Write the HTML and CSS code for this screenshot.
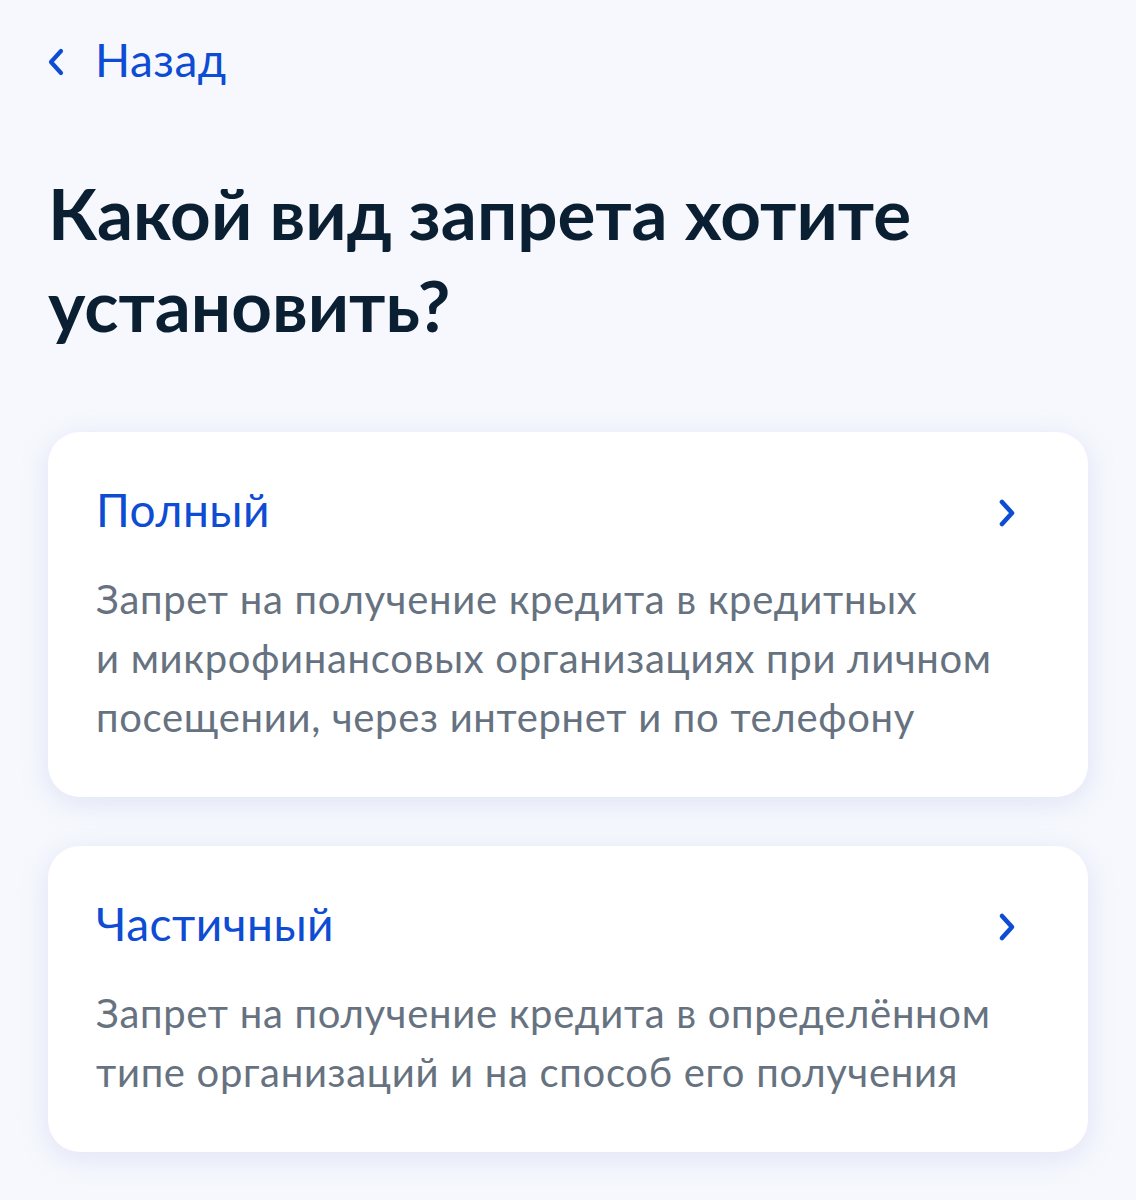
FILE: index.html
```html
<!DOCTYPE html>
<html lang="ru">
<head>
<meta charset="utf-8">
<title>Какой вид запрета хотите установить?</title>
<link rel="stylesheet" href="styles.css">
</head>
<body>
<div class="page">
  <a class="back" href="#">
    <svg class="back-icon" viewBox="0 0 22 32" width="22" height="32" aria-hidden="true">
      <path d="M16 5 L6 16 L16 27" fill="none" stroke="#0d4cd3" stroke-width="4.2" stroke-linecap="round" stroke-linejoin="round"/>
    </svg>
    <span class="back-text">Назад</span>
  </a>
  <h1 class="heading">Какой вид запрета хотите установить?</h1>
  <div class="cards">
    <a class="card" href="#">
      <div class="card-head">
        <span class="card-title">Полный</span>
        <svg class="chev" viewBox="0 0 22 32" width="22" height="32" aria-hidden="true">
          <path d="M6 5 L16 16 L6 27" fill="none" stroke="#0d4cd3" stroke-width="4.6" stroke-linecap="round" stroke-linejoin="round"/>
        </svg>
      </div>
      <p class="card-desc">Запрет на получение кредита в&nbsp;кредитных и&nbsp;микрофинансовых организациях при личном посещении, через интернет и&nbsp;по&nbsp;телефону</p>
    </a>
    <a class="card" href="#">
      <div class="card-head">
        <span class="card-title">Частичный</span>
        <svg class="chev" viewBox="0 0 22 32" width="22" height="32" aria-hidden="true">
          <path d="M6 5 L16 16 L6 27" fill="none" stroke="#0d4cd3" stroke-width="4.6" stroke-linecap="round" stroke-linejoin="round"/>
        </svg>
      </div>
      <p class="card-desc">Запрет на получение кредита в&nbsp;определённом типе организаций и&nbsp;на&nbsp;способ его получения</p>
    </a>
  </div>
</div>
</body>
</html>
```

FILE: styles.css
```css
* { box-sizing: border-box; }
html, body { margin: 0; padding: 0; }
body {
  background: #f6f8fd;
  font-family: Lato, "Noto Sans", sans-serif;
  color: #0b1f33;
}
.page {
  padding: 32px 48px 40px;
}
.back {
  display: flex;
  align-items: center;
  gap: 28px;
  text-decoration: none;
  color: #0d4cd3;
  height: 56px;
}
.back-icon {
  margin-left: -3px;
  margin-top: 4px;
  flex: none;
}
.back-text {
  font-size: 46px;
  line-height: 56px;
  letter-spacing: 0.5px;
}
.heading {
  margin: 79px 0 81px;
  font-size: 71px;
  line-height: 92px;
  font-weight: 700;
  color: #0b1f33;
  max-width: 900px;
}
.cards {
  display: flex;
  flex-direction: column;
  gap: 49px;
}
.card {
  display: block;
  background: #ffffff;
  border-radius: 32px;
  padding: 50px 70px 50px 48px;
  text-decoration: none;
  box-shadow: 0 6px 28px rgba(150, 168, 220, 0.24);
}
.card-head {
  display: flex;
  align-items: center;
  justify-content: space-between;
}
.card-title {
  font-size: 46px;
  line-height: 56px;
  letter-spacing: 0.5px;
  color: #0d4cd3;
}
.chev {
  flex: none;
  margin-top: 6px;
}
.card-desc {
  margin: 32px 0 0;
  font-size: 40px;
  line-height: 59px;
  letter-spacing: 0.7px;
  color: #66727f;
}
```
